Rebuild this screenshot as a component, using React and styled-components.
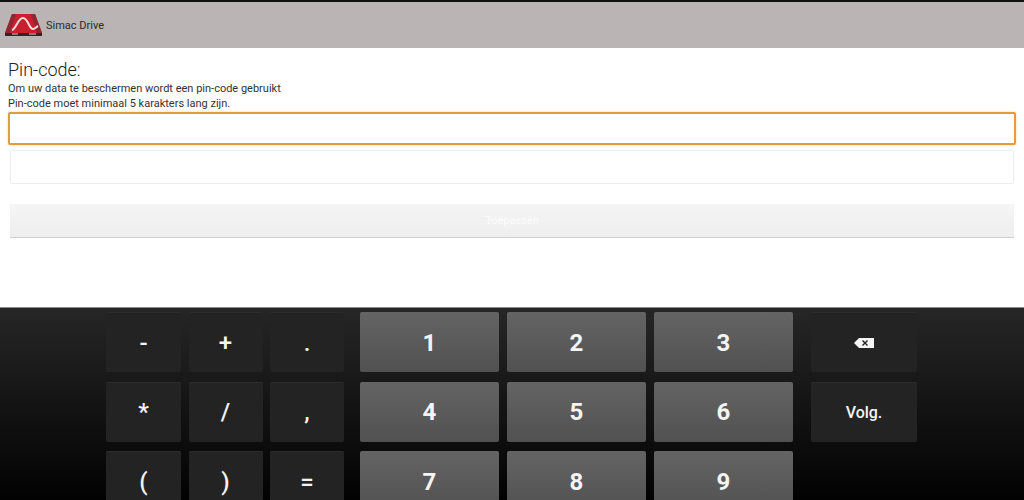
import React from 'react'
import styled, { createGlobalStyle } from 'styled-components'

const Global = createGlobalStyle`
  html, body {
    margin: 0;
    padding: 0;
    background: #fff;
    font-family: Roboto, "Liberation Sans", sans-serif;
  }
`

const Screen = styled.div`
  width: 1024px;
  height: 500px;
  display: flex;
  flex-direction: column;
  overflow: hidden;
`

const ActionBar = styled.header`
  height: 46px;
  flex: none;
  display: flex;
  align-items: center;
  gap: 4px;
  padding-left: 4px;
  background: #bab4b4;
  border-top: 2px solid #111;
`

const AppTitle = styled.span`
  font-size: 11px;
  color: #2b2b2b;
`

const Content = styled.main`
  height: 259px;
  flex: none;
  display: flex;
  flex-direction: column;
  padding: 10px 8px 0;
  box-sizing: border-box;
  background: #fff;
`

const Heading = styled.h1`
  margin: 0;
  font-size: 18px;
  font-weight: 300;
  line-height: 23px;
  color: #222;
`

const Hint = styled.p`
  margin: 0;
  font-size: 11px;
  line-height: 15px;
  color: #333;
`

const Field = styled.div`
  height: ${p => (p.$focused ? 33 : 34)}px;
  margin: ${p => (p.$focused ? '1px 0 0' : '5px 2px 0')};
  box-sizing: border-box;
  border-radius: 2px;
  background: #fff;
  border: ${p => (p.$focused ? '2px solid #e59a3c' : '1px solid #eeeeee')};
  box-shadow: ${p => (p.$focused ? '0 0 3px #f6d9ad' : 'none')};
`

const ApplyButton = styled.div`
  height: 33px;
  margin: 20px 2px 0;
  display: flex;
  align-items: center;
  justify-content: center;
  font-size: 11px;
  color: #fbfbfb;
  background: linear-gradient(#f5f5f5, #eeeeee);
  border-bottom: 1px solid #cfcfcf;
`

const Keyboard = styled.section`
  flex: 1;
  display: flex;
  padding: 4px 0 0 106px;
  border-top: 1px solid #8a8a8a;
  background: linear-gradient(#262626, #000);
`

const Pad = styled.div`
  display: grid;
  grid-template-columns: ${p => p.$columns};
  grid-auto-rows: 60px;
  column-gap: ${p => p.$gap}px;
  row-gap: 9.5px;
  margin-left: ${p => p.$offset || 0}px;
`

const Key = styled.div`
  display: flex;
  align-items: center;
  justify-content: center;
  padding-top: 1px;
  box-sizing: border-box;
  border-radius: 2px;
  color: #f4f4f4;
  font-weight: ${p => (p.$digit ? 700 : 500)};
  font-size: ${p => (p.$digit ? 24 : p.$small ? 16 : 24)}px;
  background: ${p => (p.$digit ? 'linear-gradient(#646464, #515151)' : '#232323')};
  box-shadow: ${p => (p.$digit ? 'none' : 'inset 0 1px 0 #2c2c2c')};
`

const Logo = () => (
  <svg width="38" height="24" viewBox="0 0 38 24">
    <path d="M8 1H31L38 20H1Z" fill="#c8202f" />
    <path d="M8 1H12L6 20H1Z" fill="#8f2730" />
    <path d="M27 1H31L38 20H33Z" fill="#8f2730" />
    <path d="M1 20H38V23H1Z" fill="#3a1f23" />
    <path d="M8 21H14M25 21H32" stroke="#d8d0d0" strokeWidth="1" />
    <path d="M8 17C12 16 14 5 19 5C24 5 25 16 29 16C31 16 32 14 34 13" fill="none" stroke="#f8dcdc" strokeWidth="2" />
  </svg>
)

const Backspace = () => (
  <svg width="22" height="12" viewBox="0 0 22 12">
    <path d="M6 1H21V11H6L1 6Z" fill="#f4f4f4" />
    <path d="M9.5 3.5L14.5 8.5M14.5 3.5L9.5 8.5" stroke="#222" strokeWidth="1.4" />
  </svg>
)

const symbols = ['-', '+', '.', '*', '/', ',', '(', ')', '=']
const digits = ['1', '2', '3', '4', '5', '6', '7', '8', '9']

export default function App() {
  return (
    <Screen>
      <Global />
      <ActionBar>
        <Logo />
        <AppTitle>Simac Drive</AppTitle>
      </ActionBar>
      <Content>
        <Heading>Pin-code:</Heading>
        <Hint>Om uw data te beschermen wordt een pin-code gebruikt</Hint>
        <Hint>Pin-code moet minimaal 5 karakters lang zijn.</Hint>
        <Field $focused />
        <Field />
        <ApplyButton>Toepassen</ApplyButton>
      </Content>
      <Keyboard>
        <Pad $columns="75px 74px 74px" $gap={7.5}>
          {symbols.map(k => <Key key={k}>{k}</Key>)}
        </Pad>
        <Pad $columns="139px 139px 139px" $gap={8} $offset={16}>
          {digits.map(k => <Key key={k} $digit>{k}</Key>)}
        </Pad>
        <Pad $columns="106px" $gap={0} $offset={18}>
          <Key $small><Backspace /></Key>
          <Key $small>Volg.</Key>
        </Pad>
      </Keyboard>
    </Screen>
  )
}
